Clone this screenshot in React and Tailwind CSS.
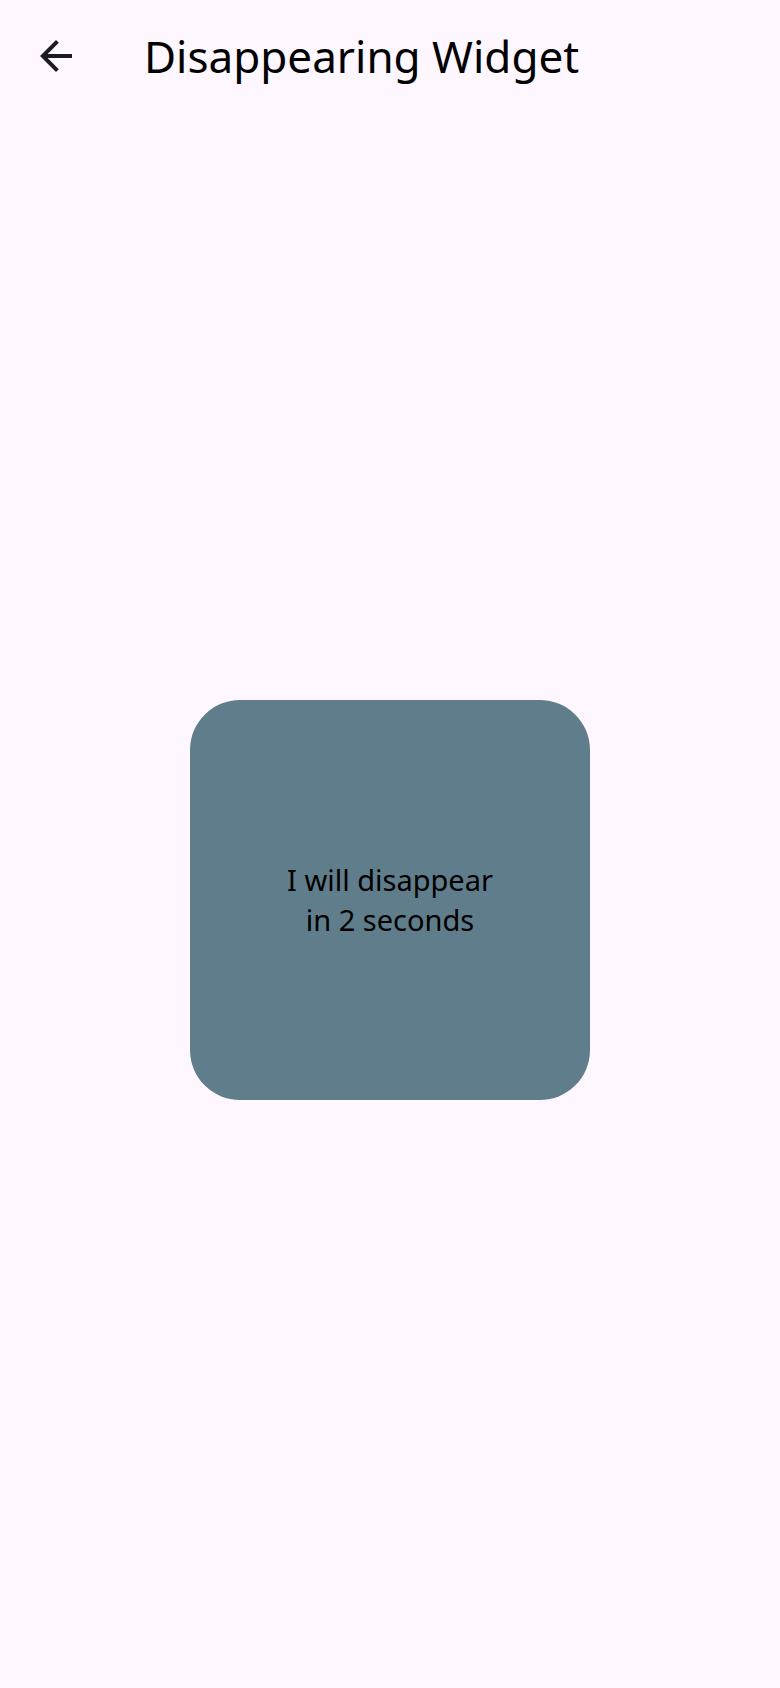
import React from 'react';

const App = () => {
  return (
    <div
      className="w-[780px] h-[1688px] bg-[#fef7ff] flex flex-col"
      style={{ fontFamily: '"Noto Sans", "Open Sans", sans-serif' }}
    >
      {/* App bar */}
      <div className="h-[112px] flex items-center shrink-0">
        <button className="w-[48px] h-[48px] ml-[32px] flex items-center justify-center text-[#1d1b20]">
          <svg width="48" height="48" viewBox="0 0 24 24" fill="currentColor">
            <path d="M20 11H7.83l5.59-5.59L12 4l-8 8 8 8 1.41-1.41L7.83 13H20v-2z" />
          </svg>
        </button>
        <h1 className="ml-[64px] text-[44px] leading-[60px] text-black font-normal">
          Disappearing Widget
        </h1>
      </div>

      {/* Body */}
      <div className="flex-1 flex items-center justify-center">
        <div className="w-[400px] h-[400px] rounded-[50px] bg-[#607d8b] flex items-center justify-center">
          <p className="text-[29px] leading-[40px] text-black text-center">
            I will disappear
            <br />
            in 2 seconds
          </p>
        </div>
      </div>
    </div>
  );
};

export default App;
